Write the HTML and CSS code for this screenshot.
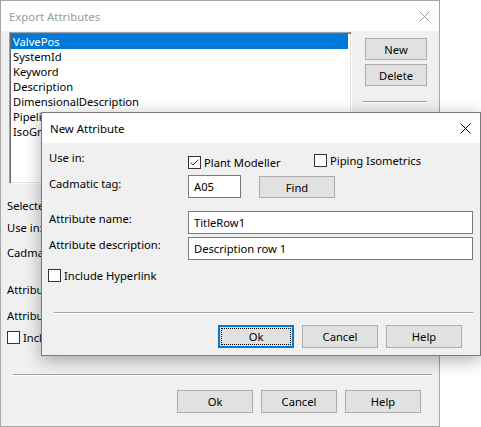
FILE: index.html
```html
<!DOCTYPE html>
<html>
<head>
<meta charset="utf-8">
<link rel="stylesheet" href="styles.css">
</head>
<body>
<div class="desk">
  <div class="win back">
    <div class="titlebar">
      <span class="title inactive">Export Attributes</span>
      <svg class="close" width="11" height="11" viewBox="0 0 11 11"><path d="M0.5 0.5 L10.5 10.5 M10.5 0.5 L0.5 10.5" stroke="#999" stroke-width="1" fill="none"/></svg>
    </div>
    <div class="body back-body">
      <div class="top-row">
        <div class="listbox">
          <div class="item sel">ValvePos</div>
          <div class="item">SystemId</div>
          <div class="item">Keyword</div>
          <div class="item">Description</div>
          <div class="item">DimensionalDescription</div>
          <div class="item">PipelineName</div>
          <div class="item">IsoGroup</div>
        </div>
        <div class="side">
          <button class="btn side-btn">New</button>
          <button class="btn side-btn">Delete</button>
          <div class="sep side-sep"></div>
        </div>
      </div>
      <div class="back-form">
        <div class="blabel r1">Selected attribute:</div>
        <div class="blabel r2">Use in:</div>
        <div class="blabel r3">Cadmatic tag:</div>
        <div class="blabel r4">Attribute name:</div>
        <div class="blabel r5">Attribute description:</div>
        <div class="check-row r6"><span class="cb"></span><span class="cb-text">Include Hyperlink</span></div>
      </div>
      <div class="sep back-sep"></div>
      <div class="btn-row back-btns">
        <button class="btn dlg-btn">Ok</button>
        <button class="btn dlg-btn">Cancel</button>
        <button class="btn dlg-btn">Help</button>
      </div>
    </div>
  </div>

  <div class="win front">
    <div class="titlebar front-title">
      <span class="title">New Attribute</span>
      <svg class="close fclose" width="11" height="11" viewBox="0 0 11 11"><path d="M0.5 0.5 L10.5 10.5 M10.5 0.5 L0.5 10.5" stroke="#000" stroke-width="1" fill="none"/></svg>
    </div>
    <div class="body front-body">
      <div class="frow row-use">
        <div class="flabel">Use in:</div>
        <label class="check-row plant"><span class="cb checked"><svg width="11" height="11" viewBox="0 0 11 11"><polyline points="1.5,5.5 4,8 9.5,2.5" fill="none" stroke="#333" stroke-width="1"/></svg></span><span class="cb-text">Plant Modeller</span></label>
        <label class="check-row piping"><span class="cb"></span><span class="cb-text">Piping Isometrics</span></label>
      </div>
      <div class="frow row-tag">
        <div class="flabel">Cadmatic tag:</div>
        <div class="tbox tag">A05</div>
        <button class="btn find">Find</button>
      </div>
      <div class="frow row-name">
        <div class="flabel">Attribute name:</div>
        <div class="tbox wide">TitleRow1</div>
      </div>
      <div class="frow row-desc">
        <div class="flabel">Attribute description:</div>
        <div class="tbox wide">Description row 1</div>
      </div>
      <label class="check-row row-link"><span class="cb"></span><span class="cb-text">Include Hyperlink</span></label>
      <div class="sep front-sep"></div>
      <div class="btn-row front-btns">
        <button class="btn dlg-btn focus"><span class="focus-rect">Ok</span></button>
        <button class="btn dlg-btn">Cancel</button>
        <button class="btn dlg-btn">Help</button>
      </div>
    </div>
  </div>
</div>
</body>
</html>
```

FILE: styles.css
```css
html, body {
  margin: 0;
  padding: 0;
  background: #ffffff;
}
body {
  font-family: "Noto Sans", "Open Sans", sans-serif;
  font-size: 11.2px;
  line-height: 15px;
  color: #000;
}
.desk {
  position: relative;
  width: 481px;
  height: 427px;
  overflow: hidden;
}
.win {
  box-sizing: border-box;
  width: 440px;
  display: flex;
  flex-direction: column;
  background: #f0f0f0;
}
.back {
  height: 427px;
  border: 1px solid #a6a6a6;
}
.front {
  position: absolute;
  left: 41px;
  top: 112px;
  height: 244px;
  border: 1px solid #7a7a7a;
  box-shadow: 0 4px 16px rgba(0, 0, 0, 0.32);
}
.titlebar {
  height: 30px;
  flex: none;
  background: #ffffff;
  display: flex;
  align-items: center;
  justify-content: space-between;
  padding: 0 9px 0 8px;
}
.title {
  font-size: 11.4px;
  padding-top: 0;
}
.title.inactive {
  color: #9a9a9a;
}
.close {
  display: block;
  margin-top: 0;
}
.front-title {
  padding-right: 9px;
}
.body {
  flex: 1;
  display: flex;
  flex-direction: column;
}

/* back dialog */
.top-row {
  display: flex;
  align-items: flex-start;
}
.listbox {
  box-sizing: border-box;
  width: 343px;
  height: 152px;
  margin: 1px 0 0 8px;
  background: #fff;
  border: 1px solid;
  border-color: #a0a0a0 #ffffff #ffffff #a0a0a0;
  box-shadow: inset 1px 1px 0 #696969, inset -1px -1px 0 #e3e3e3;
  padding: 1px 3px 0 1px;
}
.item {
  height: 15px;
  line-height: 15px;
  padding-left: 2px;
  white-space: nowrap;
  overflow: hidden;
}
.item.sel {
  background: #0078d7;
  color: #fff;
}
.side {
  width: 64px;
  margin: 7px 0 0 11px;
  display: flex;
  flex-direction: column;
  align-items: flex-end;
  gap: 4px;
}
.btn {
  box-sizing: border-box;
  font: inherit;
  color: #000;
  background: #e1e1e1;
  border: 1px solid #adadad;
  padding: 0;
  margin: 0;
  display: flex;
  align-items: center;
  justify-content: center;
}
.side-btn {
  width: 62px;
  height: 22px;
}
.sep {
  height: 1px;
  background: #a0a0a0;
  border-bottom: 1px solid #ffffff;
}
.side-sep {
  width: 64px;
  margin-top: 11px;
}
.back-form {
  display: flex;
  flex-direction: column;
  padding-left: 6px;
}
.blabel {
  height: 15px;
  white-space: nowrap;
}
.r1 { margin-top: 14px; }
.r2 { margin-top: 7px; }
.r3 { margin-top: 10px; }
.r4 { margin-top: 22px; }
.r5 { margin-top: 11px; }
.r6 { margin-top: 8px; }
.back-form .check-row { margin-left: 0; }
.back-sep {
  width: 419px;
  margin: 30px 0 0 12px;
}
.btn-row {
  display: flex;
  justify-content: flex-end;
  gap: 8px;
}
.dlg-btn {
  width: 76px;
  height: 23px;
}
.back-btns {
  margin: 14px 18px 0 0;
}

/* checkbox */
.check-row {
  display: flex;
  align-items: center;
  height: 13px;
}
.cb {
  box-sizing: border-box;
  width: 13px;
  height: 13px;
  border: 1px solid #333333;
  background: #ffffff;
  display: flex;
  flex: none;
}
.cb svg {
  display: block;
}
.cb-text {
  margin-left: 3px;
  white-space: nowrap;
}

/* front dialog */
.front-body {
  padding-left: 6px;
}
.frow {
  display: flex;
  align-items: flex-start;
}
.flabel {
  width: 139px;
  flex: none;
  white-space: nowrap;
  margin-left: 1px;
}
.row-use {
  margin-top: 7px;
  height: 20px;
}
.row-use .check-row {
  align-self: flex-end;
}
.plant {
  width: 126px;
  margin-bottom: 1px;
}
.piping {
  margin-bottom: 3px;
}
.row-tag {
  margin-top: 5px;
  height: 23px;
}
.row-tag .flabel {
  padding-top: 1px;
}
.tbox {
  box-sizing: border-box;
  height: 23px;
  background: #ffffff;
  border: 1px solid #7a7a7a;
  padding-left: 5px;
  display: flex;
  align-items: center;
  white-space: nowrap;
}
.tag {
  width: 53px;
}
.find {
  width: 76px;
  height: 22px;
  margin: 1px 0 0 18px;
}
.row-name {
  margin-top: 13px;
}
.row-desc {
  margin-top: 3px;
}
.wide {
  width: 285px;
}
.row-link {
  margin-top: 9px;
}
.front-sep {
  width: 419px;
  margin: 30px 0 0 6px;
}
.front-btns {
  margin: 11px 18px 0 0;
}
.dlg-btn.focus {
  border: 2px solid #0078d7;
  padding: 1px;
}
.focus-rect {
  box-sizing: border-box;
  width: 100%;
  height: 100%;
  border: 1px dotted #000000;
  display: flex;
  align-items: center;
  justify-content: center;
}
```
